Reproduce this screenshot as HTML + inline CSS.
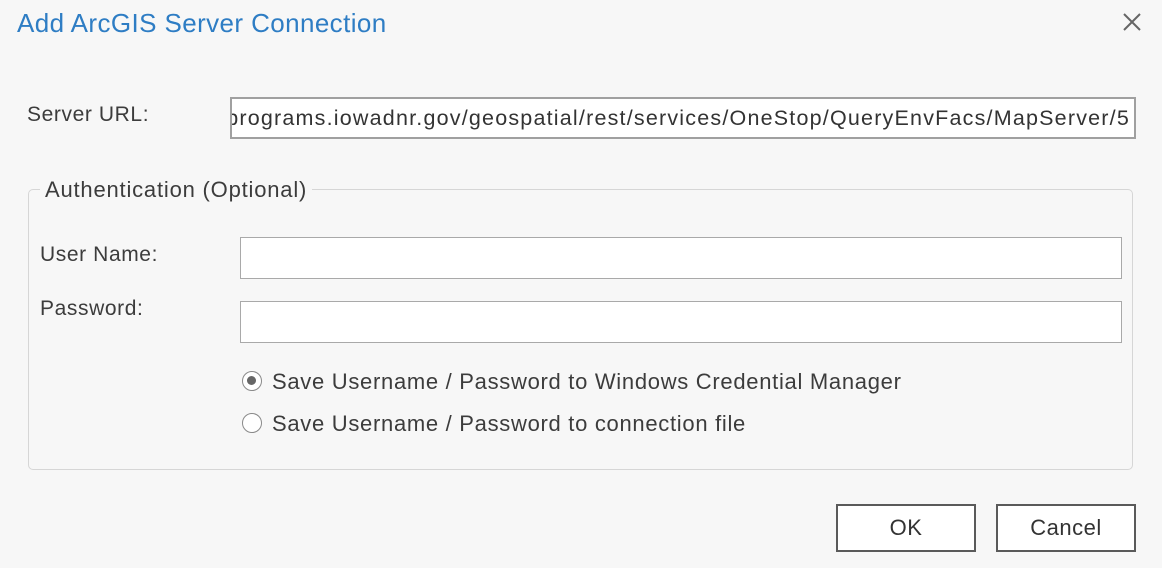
<!DOCTYPE html>
<html><head><meta charset="utf-8"><style>
body{margin:0;width:1162px;height:568px;background:#f7f7f7;font-family:"Liberation Sans",sans-serif;color:#3c3c3c;position:relative;overflow:hidden}
.a{position:absolute;white-space:nowrap}
.box{position:absolute;background:#fff;border:1px solid #a9a9a9;box-sizing:border-box;overflow:hidden}
.btn{position:absolute;background:#fff;border:2px solid #5a5a5a;box-sizing:border-box;text-align:center;font-size:22px;line-height:44px;color:#333;letter-spacing:0.5px}
.rad{position:absolute;width:20px;height:20px;border:1.5px solid #8a8a8a;border-radius:50%;box-sizing:border-box;background:#fff}
.l{font-size:21px;letter-spacing:0.6px}
.r{font-size:22px;letter-spacing:0.7px}
</style></head><body>
<div class="a" style="left:17px;top:8px;font-size:26px;letter-spacing:0.4px;color:#2e7dc4">Add ArcGIS Server Connection</div>
<svg class="a" style="left:1122px;top:13px" width="20" height="18"><path d="M2 1L18 17M18 1L2 17" stroke="#666" stroke-width="2"/></svg>
<div class="a l" style="left:27px;top:103px">Server URL:</div>
<div class="box" style="left:230px;top:97px;width:906px;height:42px;border:2px solid #a0a0a0"><span class="a" style="right:4px;top:7px;font-size:21.5px;color:#333;letter-spacing:1.2px">programs.iowadnr.gov/geospatial/rest/services/OneStop/QueryEnvFacs/MapServer/5</span></div>
<div class="a" style="left:28px;top:189px;width:1105px;height:281px;border:1px solid #d6d6d6;border-radius:5px;box-sizing:border-box"></div>
<div class="a" style="left:40px;top:177px;padding:0 5px;background:#f7f7f7;font-size:22px;letter-spacing:0.8px">Authentication (Optional)</div>
<div class="a l" style="left:40px;top:243px">User Name:</div>
<div class="box" style="left:240px;top:237px;width:882px;height:42px"></div>
<div class="a l" style="left:40px;top:297px">Password:</div>
<div class="box" style="left:240px;top:301px;width:882px;height:42px"></div>
<div class="rad" style="left:242px;top:371px"><div style="position:absolute;left:4px;top:4px;width:9px;height:9px;border-radius:50%;background:#666"></div></div>
<div class="a r" style="left:272px;top:369px">Save Username / Password to Windows Credential Manager</div>
<div class="rad" style="left:242px;top:413px"></div>
<div class="a r" style="left:272px;top:411px">Save Username / Password to connection file</div>
<div class="btn" style="left:836px;top:504px;width:140px;height:48px">OK</div>
<div class="btn" style="left:996px;top:504px;width:140px;height:48px">Cancel</div>
</body></html>
